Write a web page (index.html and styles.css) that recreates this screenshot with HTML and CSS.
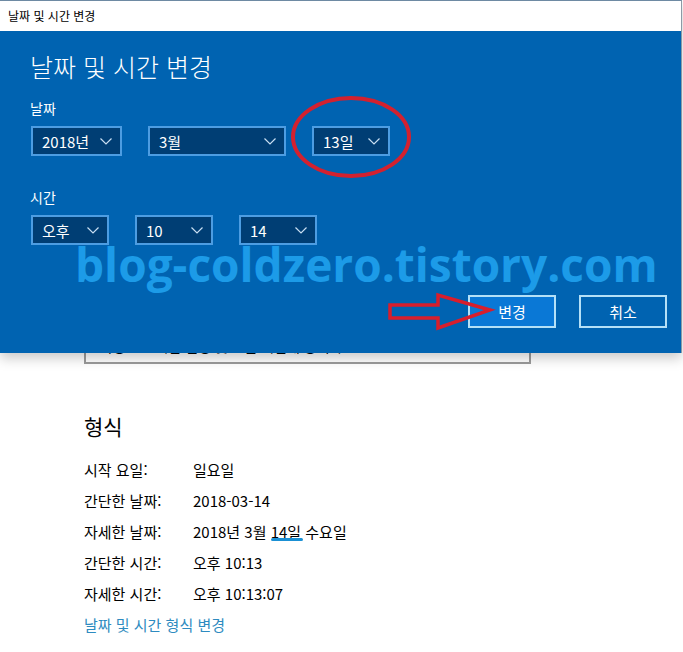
FILE: index.html
```html
<!DOCTYPE html>
<html lang="ko">
<head>
  <meta charset="UTF-8">
  <meta name="viewport" content="width=device-width, initial-scale=1.0">
  <title>날짜 및 시간 변경</title>
  <link rel="stylesheet" href="styles.css">
</head>
<body>
  <div class="dialog">
    <div class="titlebar">날짜 및 시간 변경</div>
    <div class="panel">
      <h1 class="panel-title">날짜 및 시간 변경</h1>

      <div class="field-label first">날짜</div>
      <div class="combo-row">
        <div class="combo w91"><span>2018년</span><svg class="chev" viewBox="0 0 12 7"><polyline points="0.5,0.5 6,6 11.5,0.5"/></svg></div>
        <div class="combo w138"><span>3월</span><svg class="chev" viewBox="0 0 12 7"><polyline points="0.5,0.5 6,6 11.5,0.5"/></svg></div>
        <div class="combo w78"><span>13일</span><svg class="chev" viewBox="0 0 12 7"><polyline points="0.5,0.5 6,6 11.5,0.5"/></svg></div>
      </div>

      <div class="field-label">시간</div>
      <div class="combo-row">
        <div class="combo w78"><span>오후</span><svg class="chev" viewBox="0 0 12 7"><polyline points="0.5,0.5 6,6 11.5,0.5"/></svg></div>
        <div class="combo w78"><span>10</span><svg class="chev" viewBox="0 0 12 7"><polyline points="0.5,0.5 6,6 11.5,0.5"/></svg></div>
        <div class="combo w78"><span>14</span><svg class="chev" viewBox="0 0 12 7"><polyline points="0.5,0.5 6,6 11.5,0.5"/></svg></div>
      </div>

      <div class="actions">
        <button class="btn primary">변경</button>
        <button class="btn">취소</button>
      </div>

      <!-- annotations drawn over the screenshot -->
      <div class="watermark">blog-coldzero.tistory.com</div>
      <svg class="circle-mark" width="122" height="84" viewBox="0 0 122 84">
        <ellipse cx="61" cy="42" rx="58" ry="39"/>
      </svg>
      <svg class="arrow-mark" width="110" height="42" viewBox="0 0 110 42">
        <polygon points="4,14 52,14 52,4 104,19 52,37 52,27 4,27"/>
      </svg>
    </div>
  </div>

  <div class="page">
    <div class="sync-box">자동으로 시간 설정 및 표준 시간대 동기화</div>

    <h2 class="section-title">형식</h2>
    <div class="format-list">
      <div class="format-row"><span>시작 요일:</span><span>일요일</span></div>
      <div class="format-row"><span>간단한 날짜:</span><span>2018-03-14</span></div>
      <div class="format-row"><span>자세한 날짜:</span><span>2018년 3월 <span class="underline">14일</span> 수요일</span></div>
      <div class="format-row"><span>간단한 시간:</span><span>오후 10:13</span></div>
      <div class="format-row"><span>자세한 시간:</span><span>오후 10:13:07</span></div>
    </div>
    <a class="format-link" href="#">날짜 및 시간 형식 변경</a>
  </div>
</body>
</html>
```

FILE: styles.css
```css
body {
  margin: 0;
  background: #ffffff;
  font-family: "Noto Sans CJK KR", "Noto Sans", sans-serif;
  color: #000;
}

.dialog {
  position: absolute;
  top: 0;
  left: 0;
  width: 682px;
  z-index: 2;
  border-top: 1px solid #6e8aa3;
  border-right: 1px solid #8d9aa6;
  box-sizing: border-box;
  box-shadow: 0 5px 12px rgba(0, 0, 0, 0.22);
}

.titlebar {
  height: 30px;
  line-height: 30px;
  padding-left: 8px;
  font-size: 12px;
  background: #ffffff;
}

.panel {
  position: relative;
  background: #0063b1;
  color: #ffffff;
  padding: 18px 14px 25px 30px;
}

.panel-title {
  margin: 0;
  font-size: 25px;
  font-weight: 300;
  line-height: 34px;
}

.field-label {
  margin-top: 31px;
  font-size: 14px;
  line-height: 20px;
}

.field-label.first {
  margin-top: 15px;
}

.combo-row {
  display: flex;
  gap: 26px;
  margin-top: 8px;
  margin-left: 1px;
}

.combo {
  box-sizing: border-box;
  height: 30px;
  border: 2px solid #4d9de2;
  background: #003e74;
  display: flex;
  align-items: center;
  justify-content: space-between;
  padding: 0 8px 0 9px;
  font-size: 15px;
}

.w91 { width: 91px; }
.w138 { width: 138px; }
.w78 { width: 78px; }

.chev {
  width: 12px;
  height: 7px;
  fill: none;
  stroke: #c9dff2;
  stroke-width: 1.2;
}

.actions {
  display: flex;
  justify-content: flex-end;
  gap: 23px;
  margin-top: 50px;
}

.btn {
  width: 88px;
  height: 33px;
  box-sizing: border-box;
  border: 2px solid #b4e0f7;
  background: #0063b1;
  color: #ffffff;
  font-family: inherit;
  font-size: 15px;
  padding: 0;
}

.btn.primary {
  background: #0a78d6;
}

.watermark {
  position: absolute;
  left: 75px;
  top: 214px;
  font-family: "Open Sans", sans-serif;
  font-weight: 700;
  font-size: 46px;
  line-height: 38px;
  color: #1c9be8;
  white-space: nowrap;
  pointer-events: none;
}

.circle-mark {
  position: absolute;
  left: 290px;
  top: 64px;
  fill: none;
  stroke: #d3212f;
  stroke-width: 4;
}

.arrow-mark {
  position: absolute;
  left: 386px;
  top: 260px;
  fill: none;
  stroke: #d81e2c;
  stroke-width: 3.5;
  stroke-linejoin: miter;
}

.page {
  padding: 320px 0 0 84px;
}

.sync-box {
  box-sizing: border-box;
  width: 447px;
  height: 44px;
  border: 2px solid #9b9b9b;
  padding: 14px 14px 0;
  font-size: 14px;
  line-height: 20px;
}

.section-title {
  margin: 47px 0 0;
  font-size: 21px;
  font-weight: 400;
  line-height: 30px;
}

.format-list {
  margin-top: 13px;
}

.format-row {
  display: grid;
  grid-template-columns: 109px auto;
  font-size: 15px;
  line-height: 31px;
}

.underline {
  position: relative;
}

.underline::after {
  content: "";
  position: absolute;
  left: 0;
  right: -2px;
  bottom: 1px;
  height: 3px;
  border-radius: 2px;
  background: #1a90d4;
}

.format-link {
  display: block;
  font-size: 15px;
  line-height: 31px;
  color: #2e8bc0;
  text-decoration: none;
}
```
